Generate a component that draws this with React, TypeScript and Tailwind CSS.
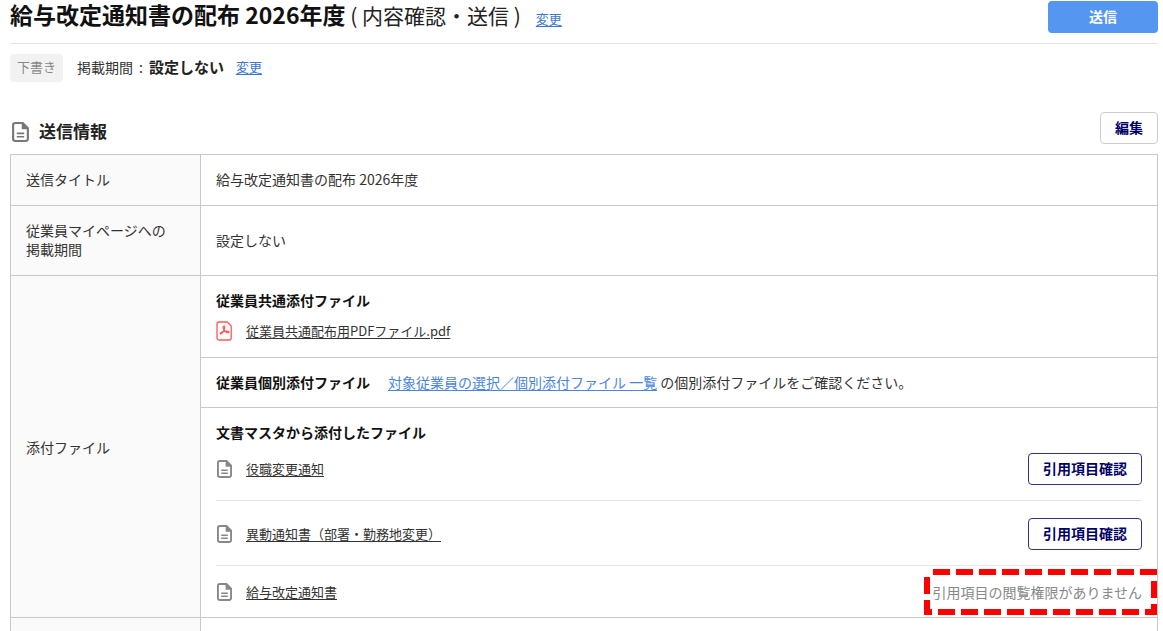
import type { ReactNode } from "react";

const documents = [
  { name: "役職変更通知", canView: true, spacing: "pt-[11px] pb-[15px]" },
  { name: "異動通知書（部署・勤務地変更）", canView: true, spacing: "pt-[17px] pb-[15px]" },
  { name: "給与改定通知書", canView: false, spacing: "pt-4 pb-[15px]" },
];

function DocumentIcon({ className }: { className: string }) {
  return (
    <svg viewBox="0 0 16 19" fill="none" className={className} aria-hidden="true">
      <path
        d="M3 1h7.2L15 5.8V16a2 2 0 0 1-2 2H3a2 2 0 0 1-2-2V3a2 2 0 0 1 2-2Z"
        stroke="currentColor"
        strokeWidth="2"
      />
      <path d="M9.2 1h1.4L15.2 5.6V7H9.2Z" fill="currentColor" />
      <path d="M4.5 10.8h7M4.5 14h7" stroke="currentColor" strokeWidth="1.5" />
    </svg>
  );
}

function PdfIcon() {
  return (
    <svg viewBox="0 0 16 20" fill="none" className="h-5 w-4 text-[#fb5a56]" aria-hidden="true">
      <path
        d="M3 1h8.2L15.2 5v12a2 2 0 0 1-2 2H3a2 2 0 0 1-2-2V3a2 2 0 0 1 2-2Z"
        stroke="currentColor"
        strokeWidth="1.3"
      />
      <path
        d="M7.4 5.3c1.2-.6 1.600.6 1.200 2.300-.5 2-1.800 4.300-3.200 5.100-1 .6-1.500-.3-.7-1 1.200-1.100 4.600-1.700 6.800-1.500 1.700.1 1.900 1.600.5 1.600-1.900 0-4.200-2.600-4.700-4.600-.2-.8-.2-1.500.1-1.900Z"
        stroke="currentColor"
        strokeWidth="1.3"
      />
    </svg>
  );
}

function FileLink({ children }: { children: ReactNode }) {
  return (
    <a href="#file" className="text-[13px] leading-5 text-[#333] underline underline-offset-2">
      {children}
    </a>
  );
}

function NoPermission() {
  return (
    <span className="relative text-[#888]">
      引用項目の閲覧権限がありません
      <svg
        viewBox="0 0 233 46"
        fill="none"
        className="absolute top-1/2 -right-[15px] h-[46px] w-[233px] -translate-y-1/2"
        aria-hidden="true"
      >
        <path
          d="M3 3H230V43H3Z"
          stroke="#ff0000"
          strokeWidth="6"
          strokeDasharray="17 6"
          strokeDashoffset="17"
        />
      </svg>
    </span>
  );
}

export default function App() {
  return (
    <main
      lang="ja"
      className="pr-[5px] pl-2.5 font-['Noto_Sans_CJK_JP',sans-serif] text-sm leading-5 text-[#333]"
    >
      <header className="flex items-start justify-between border-b border-[#e5e5e5] pb-2.5">
        <div className="flex items-baseline text-[#222]">
          <h1 className="text-[21px] leading-7">
            <span className="text-[23px] font-bold text-[#111]">給与改定通知書の配布 2026年度</span>
            {" ( 内容確認・送信 )"}
          </h1>
          <a href="#title" className="ml-[15px] text-[13px] text-[#3b78cf] underline underline-offset-2">
            変更
          </a>
        </div>
        <button
          type="button"
          className="mt-px h-8 w-[110px] rounded bg-[#5596f0] pb-0.5 font-bold text-white"
        >
          送信
        </button>
      </header>

      <div className="mt-2.5 flex items-center">
        <span className="rounded bg-[#f2f2f2] px-[7px] pt-[3px] pb-[5px] text-[13px] text-[#888]">
          下書き
        </span>
        <p className="ml-3.5 pb-0.5">
          掲載期間<span className="mx-1.5">:</span>
          <strong className="text-[15px] text-[#222]">設定しない</strong>
        </p>
        <a
          href="#period"
          className="ml-3 pb-0.5 text-[13px] text-[#3b78cf] underline underline-offset-2"
        >
          変更
        </a>
      </div>

      <section className="mt-[30px]">
        <div className="flex items-center justify-between">
          <h2 className="flex items-center gap-2.5 pt-1.5 pl-0.5 text-[17px] font-bold text-[#222]">
            <DocumentIcon className="mt-0.5 h-5 w-[17px] text-[#777]" />
            送信情報
          </h2>
          <button
            type="button"
            className="h-8 w-[58px] rounded border border-[#ccc] bg-white pb-0.5 font-bold text-[#000066]"
          >
            編集
          </button>
        </div>

        <table className="mt-2.5 w-full border-collapse text-left [&_td]:border [&_td]:border-[#c8c8c8] [&_td]:px-[15px] [&_th]:border [&_th]:border-[#c8c8c8] [&_th]:bg-[#fafafa] [&_th]:px-[15px] [&_th]:font-normal">
          <tbody>
            <tr>
              <th scope="row" className="w-[190px] pt-3.5 pb-4">
                送信タイトル
              </th>
              <td className="pt-3.5 pb-4">給与改定通知書の配布 2026年度</td>
            </tr>
            <tr>
              <th scope="row" className="pt-[15px] pb-4 leading-[19px]">
                従業員マイページへの
                <br />
                掲載期間
              </th>
              <td className="pb-0.5">設定しない</td>
            </tr>
            <tr>
              <th scope="row" rowSpan={3}>
                添付ファイル
              </th>
              <td className="pt-3.5 pb-4">
                <h3 className="font-bold text-[#111]">従業員共通添付ファイル</h3>
                <div className="mt-[11px] flex items-center gap-3.5">
                  <PdfIcon />
                  <FileLink>従業員共通配布用PDFファイル.pdf</FileLink>
                </div>
              </td>
            </tr>
            <tr>
              <td className="pt-3.5 pb-[15px]">
                <div className="flex items-center gap-[18px]">
                  <h3 className="font-bold text-[#111]">従業員個別添付ファイル</h3>
                  <p>
                    <a href="#targets" className="text-[#4a86dc] underline underline-offset-2">
                      対象従業員の選択／個別添付ファイル 一覧
                    </a>{" "}
                    の個別添付ファイルをご確認ください。
                  </p>
                </div>
              </td>
            </tr>
            <tr>
              <td className="pt-3.5">
                <h3 className="font-bold text-[#111]">文書マスタから添付したファイル</h3>
                <ul className="divide-y divide-[#e5e5e5]">
                  {documents.map((doc) => (
                    <li key={doc.name} className={`flex items-center justify-between ${doc.spacing}`}>
                      <div className="flex items-center gap-3.5 pl-px">
                        <DocumentIcon className="h-[18px] w-[15px] text-[#888]" />
                        <FileLink>{doc.name}</FileLink>
                      </div>
                      {doc.canView ? (
                        <button
                          type="button"
                          className="h-8 w-[114px] rounded border border-[#333380] bg-white pb-0.5 font-bold text-[#000066]"
                        >
                          引用項目確認
                        </button>
                      ) : (
                        <NoPermission />
                      )}
                    </li>
                  ))}
                </ul>
              </td>
            </tr>
            <tr className="h-[13px] [&>*]:border-b-0!">
              <th scope="row" />
              <td />
            </tr>
          </tbody>
        </table>
      </section>
    </main>
  );
}
